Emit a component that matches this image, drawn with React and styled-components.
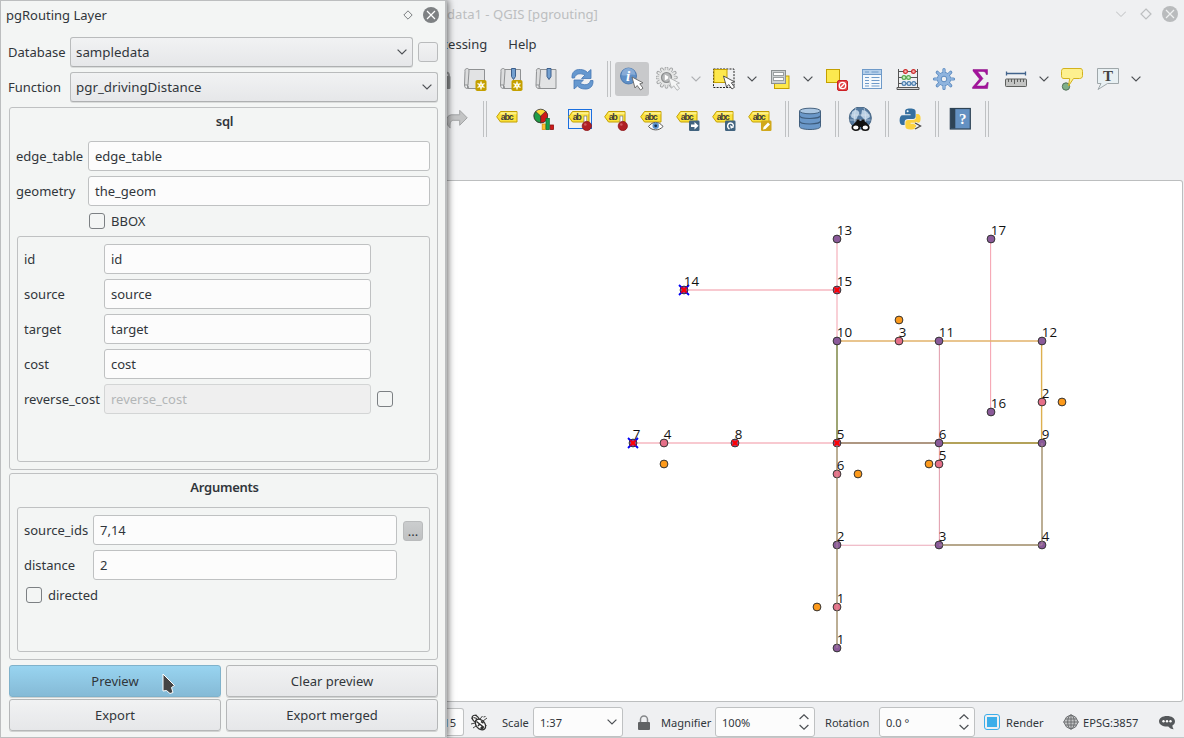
import React from "react";
import styled, { createGlobalStyle } from "styled-components";

const Global = createGlobalStyle`
  * { box-sizing: border-box; }
  body { margin: 0; background: #eff0f1; font-family: "Noto Sans", "Open Sans", sans-serif; color: #31363b; overflow: hidden; }
`;

const Screen = styled.div`
  display: flex;
  width: 1184px;
  height: 738px;
  overflow: hidden;
`;

/* ---------- dialog ---------- */
const Dialog = styled.section`
  width: 447px;
  flex: none;
  height: 738px;
  position: relative;
  z-index: 1;
  background: #f3f5f4;
  border: 1px solid #bcbebf;
  border-right: 2px solid #bcbebf;
  box-shadow: 1px 0 7px rgba(0, 0, 0, 0.6);
  font-size: 13px;
  line-height: 18px;
  padding: 0 7px 0 8px;
  display: flex;
  flex-direction: column;
`;
const DialogTitle = styled.header`
  display: flex;
  align-items: center;
  height: 26px;
  margin: 0 -1px 10px -3px;
  padding-top: 1px;
  flex: none;
  svg { flex: none; }
`;
const TitleText = styled.span`flex: 1;`;
const TitleGap = styled.span`
  width: ${(p) => p.$w}px;
  flex: none;
`;
const FormRow = styled.div`
  display: flex;
  align-items: center;
  height: 30px;
  flex: none;
  margin-bottom: 5px;
  margin-left: ${(p) => p.$ml || 0}px;
`;
const Label = styled.label`
  width: ${(p) => p.$w}px;
  flex: none;
  white-space: nowrap;
`;
const Field = styled.div`
  height: 30px;
  width: ${(p) => p.$w}px;
  flex: none;
  border: 1px solid ${(p) => (p.$off ? "#d3d5d5" : "#bfc1c2")};
  border-radius: 3px;
  background: ${(p) => (p.$off ? "#efefef" : "#fcfcfc")};
  color: ${(p) => (p.$off ? "#b3b6b7" : "#31363b")};
  padding: 0 6px;
  display: flex;
  align-items: center;
`;
const Combo = styled.div`
  height: 30px;
  width: ${(p) => p.$w}px;
  flex: none;
  border: 1px solid #b9bbbc;
  border-bottom-color: #aeb0b1;
  border-radius: 3px;
  background: linear-gradient(#f1f2f3, #e6e7e9);
  box-shadow: 0 1px 0 rgba(0, 0, 0, 0.1);
  padding: 0 5px;
  font-size: 13.33px;
  display: flex;
  align-items: center;
  justify-content: space-between;
`;
const ToolButton = styled.div`
  width: 20px;
  height: 20px;
  flex: none;
  margin: ${(p) => p.$mt || 0}px 0 0 ${(p) => p.$ml}px;
  border: 1px solid #b9bbbc;
  border-radius: 3px;
  background: ${(p) => (p.$dark ? "linear-gradient(#cbcdce,#bfc1c2)" : "linear-gradient(#f1f2f3, #e8e9eb)")};
  display: flex;
  align-items: center;
  justify-content: center;
  line-height: 14px;
`;
const Group = styled.fieldset`
  margin: 0 0 ${(p) => p.$mb}px;
  padding: 0 7px;
  width: 429px;
  height: ${(p) => p.$h}px;
  flex: none;
  border: 1px solid #bfc1c2;
  border-radius: 3px;
  min-width: 0;
`;
const GroupTitle = styled.h3`
  margin: 0;
  padding: 4px 0 0 2px;
  height: ${(p) => p.$h}px;
  font-size: 13px;
  font-weight: 600;
  letter-spacing: -0.25px;
  line-height: 18px;
  text-align: center;
`;
const Frame = styled.div`
  height: ${(p) => p.$h}px;
  border: 1px solid #bfc1c2;
  border-radius: 3px;
  padding: 7px 6px 0;
`;
const CheckRow = styled.div`
  display: flex;
  align-items: center;
  height: 20px;
  gap: 6px;
  margin: 0 0 5px ${(p) => p.$ml}px;
`;
const Check = styled.span`
  width: 16px;
  height: 16px;
  flex: none;
  margin-left: ${(p) => p.$ml || 0}px;
  border: 1px solid ${(p) => (p.$on ? "#3daee9" : "#7c8083")};
  border-radius: 3px;
  padding: 2px;
  background: ${(p) => (p.$on ? "#3daee9" : "none")} content-box;
`;
const Buttons = styled.div`
  display: grid;
  grid-template-columns: 212px 212px;
  gap: 2px 5px;
`;
const PushButton = styled.div`
  position: relative;
  height: 32px;
  border: 1px solid ${(p) => (p.$hot ? "#7fb2cb" : "#b5b7b8")};
  border-radius: 3px;
  background: ${(p) => (p.$hot ? "linear-gradient(#98d4f0,#85bad6)" : "linear-gradient(#f1f2f3, #e6e7e9)")};
  box-shadow: 0 1px 0 rgba(0, 0, 0, 0.14);
  display: flex;
  align-items: center;
  justify-content: center;
`;
const Pointer = styled.svg`
  position: absolute;
  left: 152px;
  top: 7px;
`;

/* ---------- main window ---------- */
const Main = styled.main`
  flex: 1;
  min-width: 0;
  display: flex;
  flex-direction: column;
  background: #eff0f2;
  overflow: hidden;
`;
const WindowTitle = styled.header`
  height: 28px;
  flex: none;
  display: flex;
  align-items: center;
  font-size: 13.1px;
  color: #bcbec0;
  padding-right: 6px;
  svg { flex: none; }
`;
const Menu = styled.nav`
  height: 32px;
  flex: none;
  display: flex;
  align-items: center;
  gap: 21px;
  font-size: 13px;
  margin-bottom: -1px;
`;
const MenuItem = styled.span`
  margin-left: ${(p) => p.$ml || 0}px;
`;
const ToolRow = styled.div`
  height: 40px;
  flex: none;
  display: flex;
  align-items: center;
`;
const Tool = styled.span`
  width: 36px;
  height: 36px;
  flex: none;
  margin-left: ${(p) => p.$ml || 0}px;
  display: flex;
  align-items: center;
  justify-content: center;
`;
const ActiveTool = styled.span`
  width: 34px;
  height: 34px;
  margin: 0 1px;
  flex: none;
  border-radius: 3px;
  background: #c8c9cb;
  display: flex;
  align-items: center;
  justify-content: center;
`;
const Drop = styled.span`
  width: 20px;
  flex: none;
  display: flex;
  justify-content: center;
  opacity: ${(p) => (p.$off ? 0.4 : 1)};
`;
const Sep = styled.span`
  width: 4px;
  height: 36px;
  margin: 0 ${(p) => p.$mr ?? 3}px 0 ${(p) => p.$ml ?? 7}px;
  flex: none;
  border: solid #bfc1c3;
  border-width: 0 1px;
`;
const Canvas = styled.div`
  margin-top: 41px;
  height: 522px;
  flex: none;
  width: 736px;
  background: #fff;
  border: 1px solid #bcbebf;
  border-left: 0;
  border-radius: 0 3px 3px 0;
  svg { display: block; }
`;
const Status = styled.footer`
  flex: 1;
  display: flex;
  align-items: center;
  font-size: 11.1px;
  padding-top: 5px;
  border-bottom: 1px solid #c5c7c8;
`;
const StatusText = styled.span`
  margin-left: ${(p) => p.$ml}px;
  width: ${(p) => p.$w}px;
  flex: none;
  white-space: nowrap;
`;
const StatusBox = styled.div`
  height: 30px;
  width: ${(p) => p.$w}px;
  flex: none;
  border: 1px solid #bfc1c2;
  border-radius: 3px;
  background: #fcfcfc;
  padding: 0 ${(p) => p.$pr ?? 4}px 0 6px;
  display: flex;
  align-items: center;
  justify-content: space-between;
`;
const CoordBox = styled(StatusBox)`
  height: 28px;
  border-left: 0;
  border-radius: 0 3px 3px 0;
  padding: 0 7px 0 0;
  justify-content: flex-end;
`;
const StatusIcon = styled.span`
  margin-left: ${(p) => p.$ml}px;
  width: ${(p) => p.$w}px;
  flex: none;
  display: flex;
`;

/* ---------- icons ---------- */
const Chevron = () => (
  <svg width="10" height="6" viewBox="0 0 10 6" fill="none" stroke="#4d5054" strokeWidth="1.2"><path d="M.6.6 5 5 9.4.6" /></svg>
);
const Spin = () => (
  <svg width="10" height="16" viewBox="0 0 10 16" fill="none" stroke="#4d5054" strokeWidth="1.2"><path d="M.6 5 5 .8 9.4 5M.6 11 5 15.2 9.4 11" /></svg>
);
const Icon = ({ children, ...rest }) => (
  <svg width="24" height="24" viewBox="0 0 24 24" fill="none" {...rest}>{children}</svg>
);
const CloseIcon = ({ color, cross }) => (
  <svg width="16" height="16" viewBox="0 0 16 16"><circle cx="8" cy="8" r="8" fill={color} /><path d="m4 4 8 8M12 4l-8 8" stroke={cross} strokeWidth="1.2" /></svg>
);
const Diamond = ({ s, color }) => (
  <svg width={s} height={s} viewBox="0 0 12 12" fill="none" stroke={color} strokeWidth="1.2"><path d="M6 1 11 6 6 11 1 6Z" /></svg>
);
const Scroll = () => (
  <g stroke="#8f9193" fill="#dcddde">
    <path d="M4.500 2.500h17v19h-17z" fill="#e2e3e4" />
    <path d="M4.500 1.500c-2 0-3 1-2.500 3L1.500 18h3.500L6 4c0-1.500-.5-2.500-1.500-2.500ZM1.500 18c0 2.500 1 3.500 3 3.500" />
    <path d="M5 18.500 5.500 21" />
  </g>
);
const Burst = () => (
  <g><rect x="12.500" y="13" width="11" height="11" rx="1.800" fill="#c4a000" /><path d="M18 14.500v8M14.500 16.500l7 4M21.500 16.500l-7 4" stroke="#fff" strokeWidth="1.300" /><circle cx="18" cy="18.500" r="2.300" fill="#fff" /><circle cx="18" cy="18.500" r="1" fill="#fce94f" /></g>
);
const Bookmark = () => <path d="M12.500 1.500h4v8l-2 3-2-3z" fill="#729fcf" stroke="#3c5f8c" />;
const Arrow = ({ x = 12, y = 10, fill = "#fff", stroke = "#555" }) => (
  <path transform={`translate(${x} ${y})`} d="M.5.5 3.500 11.500 5.700 9 9 13.500 11.500 11.700 8.300 7.300 11.500 6.300Z" fill={fill} stroke={stroke} strokeWidth=".9" />
);
const Refresh = () => (
  <g transform="translate(-.5 0)" fill="#6698cf" stroke="#4577b5" strokeWidth=".8"><path d="M1.500 11C1 5 5 2 10 2.500c3 .2 5 1 7 3l3.500-3v9h-9.500l3.300-3.300C11 6 5 6 4 11Z" /><path d="M22.500 13.500c.5 6-3.500 9-8.500 8.500-3-.2-5-1-7-3l-3.500 3v-9H13l-3.300 3.300C13 18.500 19 18.500 20 13.500Z" /></g>
);
const Tag = ({ text = "abc" }) => (
  <g><path d="M4.500 4.500h16.500v10.500H4.500L.7 9.800Z" fill="#fbe23c" stroke="#c4a000" /><path d="M5 5.200h15.500v2H4z" fill="#fdf08a" /><text x="4.800" y="12.600" fontFamily="Liberation Sans, sans-serif" fontSize="9" fontWeight="700" fill="#3a3a3a" textLength={text === "ab" ? 9 : 13}>{text}</text></g>
);
const Pin = () => (
  <g><rect x="16" y="9" width="2.800" height="8" fill="#fff" stroke="#777" strokeWidth=".7" /><circle cx="18.800" cy="19" r="4.600" fill="#b02025" stroke="#8e1418" strokeWidth=".8" /><circle cx="17.300" cy="17.500" r="1.300" fill="#cf5a5e" /></g>
);
const Badge = ({ color = "#41637f", children }) => (
  <g><rect x="13" y="13.500" width="10.500" height="10.500" rx="1.200" fill={color} />{children}</g>
);
const NewView = () => <Icon><Scroll /><Burst /></Icon>;
const NewMark = () => <Icon><Scroll /><Bookmark /><Burst /></Icon>;
const ShowMark = () => <Icon><g transform="translate(-.5 0)"><Scroll /><Bookmark /></g></Icon>;
const gearTeeth = (n, r1, r2, c) =>
  Array.from({ length: n }, (_, i) => {
    const a = (i * 2 * Math.PI) / n;
    return `M${c + r1 * Math.cos(a)} ${c + r1 * Math.sin(a)}L${c + r2 * Math.cos(a)} ${c + r2 * Math.sin(a)}`;
  }).join("");
const Identify = () => (
  <Icon><circle cx="8.500" cy="9" r="8" fill="#5f8fc6" stroke="#3f6fa8" strokeWidth=".8" /><path d="M1.500 8a7 7 0 0 1 14 0c-5-2-9 2-14 0Z" fill="#87abd6" /><text x="6" y="14.200" fontFamily="Liberation Serif, serif" fontStyle="italic" fontWeight="700" fontSize="15" fill="#fff">i</text><Arrow x={11.500} y={9.500} stroke="#666" /></Icon>
);
const ActionGear = () => (
  <Icon><path d={gearTeeth(12, 7, 9.500, 10.500)} stroke="#a2a4a5" strokeWidth="3.600" strokeLinecap="round" /><path d={gearTeeth(12, 6, 9.300, 10.500)} stroke="#e6e7e7" strokeWidth="2" strokeLinecap="round" /><circle cx="10.500" cy="10.500" r="7.600" fill="#e6e7e7" /><circle cx="10.500" cy="10.500" r="5" fill="#b5b7b8" stroke="#8c8e8f" strokeWidth="1.200" /><path d="M8.800 7.500v6l5-3z" fill="#fff" /><Arrow x={12} y={9.800} stroke="#b0b2b3" fill="#f4f5f5" /></Icon>
);
const SelectArea = () => (
  <Icon><rect x="1.500" y="2" width="20.500" height="18.500" stroke="#222" strokeDasharray="2 1.200" /><rect x="2" y="2.500" width="13" height="13" fill="#fde84d" stroke="#c4a000" /><Arrow x={11} y={8.500} stroke="#444" /></Icon>
);
const SelectForm = () => (
  <Icon><rect x="6.500" y="9" width="14.500" height="12.500" fill="#fde84d" stroke="#c4a000" /><rect x="3.500" y="3.500" width="14" height="13" fill="#ccd0d1" stroke="#8b9091" /><rect x="5.500" y="5.500" width="10" height="3" fill="#fff" stroke="#9a9fa0" /><rect x="5.500" y="10.500" width="10" height="3" fill="#fff" stroke="#9a9fa0" /></Icon>
);
const Deselect = () => (
  <Icon><rect x="2.500" y="2.500" width="13" height="13" fill="#fce94f" stroke="#c4a000" /><rect x="13.500" y="13.500" width="10" height="10" rx="1.500" fill="#e2474b" stroke="#cc1f25" /><circle cx="18.500" cy="18.500" r="3.200" stroke="#fff" strokeWidth="1.300" /><path d="m16.300 20.800 4.500-4.500" stroke="#fff" strokeWidth="1.300" /></Icon>
);
const Table = () => (
  <Icon><rect x="2.500" y="2.500" width="19" height="19" fill="#f4f8fc" stroke="#6e9ac9" /><path d="M3 3h18v4.500H3z" fill="#b5cfea" /><path d="M2.500 7.500h19M5 5h4M11.500 5h7" stroke="#6e9ac9" /><path d="M5 10.500h4M11.500 10.500h8M5 13.500h4M11.500 13.500h8M5 16.500h4M11.500 16.500h8M5 19h4M11.500 19h8" stroke="#6e9ac9" strokeWidth="1" /></Icon>
);
const Abacus = () => (
  <Icon><path d="M2.500 2v18M21.500 2v18M2.500 4.500h19M2.500 10.500h19M2.500 16.500h19" stroke="#555" /><path d="M1 20.500h22v2H1z" fill="#d8d8d8" stroke="#555" /><g strokeWidth="1.200"><g fill="#f7b5b5" stroke="#cc2a2a"><circle cx="9.500" cy="4.500" r="1.900" /><circle cx="17.500" cy="4.500" r="1.900" /></g><g fill="#c9efc4" stroke="#58a94c"><circle cx="8" cy="10.500" r="1.900" /><circle cx="12.500" cy="10.500" r="1.900" /></g><g fill="#cfe0f0" stroke="#4c7fb0"><circle cx="8" cy="16.500" r="1.900" /><circle cx="13" cy="16.500" r="1.900" /><circle cx="17.800" cy="16.500" r="1.900" /></g></g></Icon>
);
const Gear = () => (
  <Icon><path d={gearTeeth(8, 6, 9.500, 12)} stroke="#5b8ac0" strokeWidth="3.200" strokeLinecap="round" /><path d={gearTeeth(8, 5, 9.300, 12)} stroke="#8fb4de" strokeWidth="1.700" strokeLinecap="round" /><circle cx="12" cy="12" r="6.700" fill="#8fb4de" stroke="#5b8ac0" strokeWidth=".8" /><path d={gearTeeth(8, 5, 8.500, 12)} stroke="#8fb4de" strokeWidth="1.700" /><circle cx="12" cy="12" r="2.800" fill="#eff0f2" stroke="#5b8ac0" /></Icon>
);
const Sigma = () => (
  <Icon><path d="M5 2.500h14.500v5h-1.300c-.4-2-1.200-3-3.200-3H9.500l5.500 7-6.500 7.500h7c2 0 3-1.200 3.500-3.500h1.300l-.8 6H4.500v-1.200L11.500 12 5 4Z" fill="#a3129c" stroke="#8a0d84" strokeWidth=".5" /></Icon>
);
const Ruler = () => (
  <Icon><path d="M2.500 6.500h19M2.500 4.500v4M21.500 4.500v4" stroke="#41638c" strokeWidth="1.300" /><rect x="1.500" y="12" width="21" height="7.500" rx=".8" fill="#c3c4c3" stroke="#5d5f5d" /><path d="M4.500 12v3M7.500 12v3M10.500 12v5M13.500 12v3M16.500 12v3M19.500 12v3" stroke="#5d5f5d" /></Icon>
);
const Tip = () => (
  <Icon><circle cx="6" cy="19.500" r="3.700" fill="#7fb088" stroke="#55705a" /><path d="M4 1.500h16c2 0 2.500 1 2.500 3v4c0 2-1 3-3 3h-6L8.500 19l1.200-7.500H4c-2 0-2.500-1-2.500-3v-4c0-2 .8-3 2.500-3Z" fill="#fdf08f" stroke="#d3b21c" /></Icon>
);
const TextBox = () => (
  <Icon><path d="M1.500 1.500h21v15H11.500L2 22.500l3-6H1.500Z" fill="#e8f0f3" stroke="#9fa7aa" /><text x="7" y="14" fontFamily="Liberation Serif, serif" fontWeight="700" fontSize="15" fill="#444">T</text></Icon>
);
const Redo = () => (
  <Icon><path d="M5.500 20C1 17 0 8 6.500 7H15V2.500L22.500 10 15 17.500V12.500H8.500c-3 0-3.500 4-3 7.500Z" transform="translate(-1.300 .8)" fill="#c3c4c5" stroke="#a2a4a5" /></Icon>
);
const Diagram = () => (
  <Icon><g transform="translate(.7 0)"><circle cx="8" cy="9" r="6.800" fill="#fdd835" stroke="#333" strokeWidth=".8" /><path d="M8 9V15.800A6.800 6.800 0 0 1 3 4.500Z" fill="#1f9d47" stroke="#333" strokeWidth=".7" /><path d="M8 9 13 4.200A6.800 6.800 0 0 1 8 15.800Z" fill="#d01818" stroke="#333" strokeWidth=".7" /><rect x="9.500" y="17" width="3.300" height="5.500" fill="#fbc02d" stroke="#e09010" strokeWidth=".8" /><rect x="13.300" y="11.500" width="3.300" height="11" fill="#18a050" stroke="#0b7233" strokeWidth=".8" /><rect x="17.500" y="18" width="3.300" height="4.500" fill="#d01818" stroke="#8c1010" strokeWidth=".8" /></g></Icon>
);
const Database = () => (
  <Icon><path d="M1.500 4v15.500c0 1.800 4.500 3 10.500 3s10.500-1.200 10.500-3V4" fill="#6a97c8" stroke="#44617f" /><path d="M1.500 8.500c0 1.800 4.500 3 10.500 3s10.500-1.200 10.500-3M1.500 14c0 1.800 4.500 3 10.500 3s10.500-1.200 10.500-3" stroke="#3d5b7b" strokeWidth="1.200" /><ellipse cx="12" cy="4" rx="10.500" ry="2.800" fill="#aac6e2" stroke="#44617f" /></Icon>
);
const Search = () => (
  <Icon><circle cx="12.300" cy="11" r="11" fill="#54799f" stroke="#4a6886" /><path d="M4 5c3-3 6-2 7 0s-1 3-2 6-4 0-6-1ZM14 3c4 0 7 3 8 7l-5 3-4-4ZM8 13l4 1-1 5Z" fill="#b9cfe3" /><path d="M2 8h20M1.500 13h21M8 1c-2 6-2 12 0 19M16 1c2 6 2 12 0 19" stroke="#dbe6f0" strokeWidth=".6" /><path d="M9 14h7l3 2 2 4H4.500l2-4Z" fill="#111" /><path d="M8.500 12.500h3v3h-3zM13.500 12.500h3v3h-3z" fill="#111" /><g fill="#fff" stroke="#111" strokeWidth="1.600"><ellipse cx="7.800" cy="20.500" rx="3.500" ry="2.700" /><ellipse cx="17.300" cy="20.500" rx="3.500" ry="2.700" /></g></Icon>
);
const Python = () => (
  <Icon><g transform="translate(.6 0)"><path d="M11.500 1.500c-4 0-5 1-5 3v2.700h5.500v1H4c-2 0-3 2-3 5s1 4.800 3 4.800h2v-3c0-2 1.500-3 3.500-3h5c1.500 0 2.500-1 2.500-2.500v-5c0-2-1.500-3-5.500-3Z" fill="#356f9f" /><path d="M12 22.500c4 0 5.500-1 5.500-3v-2.700H12v-1h7.500c2 0 2.500-2 2.500-4.500s-1-4.300-3-4.300h-1.500v3c0 2-1.500 3-3.500 3H9.300c-1.500 0-2.500 1-2.500 2.500v4c0 2 1.500 3 5.200 3Z" fill="#fbd23f" /><circle cx="9" cy="4.300" r="1" fill="#fff" /><path d="m16.500 16 5.500 3-5.500 3" stroke="#eff0f2" strokeWidth="3" /><path d="m16.500 16 5.500 3-5.500 3" stroke="#444" strokeWidth="1.200" /></g></Icon>
);
const Help = () => (
  <Icon><rect x="2.300" y="1.500" width="20" height="20.500" fill="#6491c2" stroke="#2e4355" strokeWidth="1.200" /><path d="M2.800 2h4.500v19.500H2.800z" fill="#2e4355" /><text x="11" y="17" fontFamily="Liberation Serif, serif" fontSize="15" fill="#fff" fontWeight="700">?</text></Icon>
);
const EyeMark = () => <g><path d="M8.500 19.500c4-5.500 10.500-5.500 14.500 0-4 4.500-10.500 4.500-14.500 0Z" fill="#fff" stroke="#555" /><circle cx="15.700" cy="18.800" r="3.200" fill="#5a93cf" /><circle cx="15.700" cy="18.800" r="1.400" fill="#16324f" /></g>;
const Unlocked = () => (
  <svg width="6" height="24" viewBox="18 0 6 24"><rect x="15" y="9" width="6.500" height="13" rx="1" fill="#8d8f90" /><path d="M17 9V6q3-1 3 3" fill="none" stroke="#9a9c9d" strokeWidth="2" /></svg>
);
const Beetle = () => (
  <svg width="18" height="18" viewBox="0 0 18 18" fill="none" stroke="#2f2f2f">
    <path d="M6 1.500 7.500 5M1.500 5.500 5 6M12.500 3 10 6M17 5l-4 3M1 11l4-1M3 15l3-2M16.500 12.500 13 11M15.500 3.500l-2 .5" strokeWidth=".9" />
    <ellipse cx="5.800" cy="6" rx="4.200" ry="2.900" transform="rotate(48 5.800 6)" fill="#fff" strokeWidth="1.200" />
    <path d="m3.500 4.500 3.500 1M5 7.500l4-1.500" strokeWidth="1.300" />
    <ellipse cx="10.500" cy="11.500" rx="6" ry="4.300" transform="rotate(48 10.500 11.500)" fill="#fff" strokeWidth="1.300" />
    <path d="M6.500 8.500 14 14.500M8 13l2-2.500M11 8.500l2.500 1.500" strokeWidth="1.500" />
    <circle cx="12" cy="15" r="1.200" fill="#2f2f2f" />
  </svg>
);
const Lock = () => (
  <svg width="12" height="15" viewBox="0 0 12 15"><path d="M2.500 7V4.500a3.500 3.500 0 0 1 7 0V7" fill="none" stroke="#85878a" strokeWidth="1.500" /><rect y="7" width="12" height="8" rx="1" fill="#606264" /></svg>
);
const Globe = () => (
  <svg width="16" height="16" viewBox="0 0 16 16" fill="none" stroke="#66696b" strokeWidth=".9"><path d="M8 .8 12.500 3 15.300 8 12.500 13 8 15.200 3.500 13 .7 8 3.500 3Z" fill="#c5c6c7" /><ellipse cx="8" cy="8" rx="3.300" ry="7" /><path d="M.5 8h15M8 1v14M2.300 5h11.400M2.300 11h11.400" /></svg>
);
const Bubble = () => (
  <svg width="16" height="15" viewBox="0 0 16 15"><path d="M8 1c4.600 0 8 2.200 8 5.300 0 2.200-1.200 3.500-2.600 4.200.1 1.700.5 2.700 1.400 3.700-2.500-.1-4.300-1-5.500-2.700L8 11.600C3.400 11.600 0 9.400 0 6.300S3.400 1 8 1Z" fill="#55585b" /><g fill="#fff"><circle cx="4.500" cy="6.300" r="1.200" /><circle cx="8" cy="6.300" r="1.200" /><circle cx="11.500" cy="6.300" r="1.200" /></g></svg>
);

/* ---------- graph ---------- */
const PINK = "#f6b7c1";
const TAN = "#b0a285";
const EDGES = [
  [837, 239, 837, 341, PINK, 1.3],
  [684, 290, 837, 290, PINK, 1.3],
  [633, 443, 837, 443, PINK, 1.3],
  [990.6, 239, 990.6, 412, "#f6a6b4", 1.1],
  [939.4, 341, 939.4, 545, "#e3a2b0", 1.1],
  [837, 545.3, 939, 545.3, "#eba9b8", 1.1],
  [837, 341, 1042, 341, "#e2b26a", 1.7],
  [1041.6, 341, 1041.6, 443, "#ddb04f", 1.4],
  [837, 341, 837, 443, "#8d965c", 1.7],
  [837, 443, 939, 443, "#ae9782", 1.8],
  [939, 443, 1042, 443, "#b3a25a", 1.8],
];
const TOP_EDGES = [
  [837, 443, 837, 648],
  [939, 545, 1042, 545],
  [1042, 443, 1042, 545],
];
const VERTICES = [
  [837, 239, 13], [991, 239, 17], [684, 290, 14], [837, 290, 15], [837, 341, 10], [939, 341, 11], [1042, 341, 12],
  [991, 412, 16], [633, 443, 7], [735, 443, 8], [837, 443, 5], [939, 443, 6], [1042, 443, 9],
  [837, 545, 2], [939, 545, 3], [1042, 545, 4], [837, 648, 1],
];
const POINTS = [[899, 341, 3], [1042, 402, 2], [664, 443, 4], [939, 464, 5], [837, 474, 6], [837, 607, 1]];
const ORIGINS = [[899, 320], [1062, 402], [664, 464], [929, 464], [858, 474], [817, 607]];
const REACHED = [[684, 290], [837, 290], [633, 443], [735, 443], [837, 443]];
const STARTS = [[684, 290], [633, 443]];

const Graph = () => (
  <svg width="735" height="520" viewBox="447 181 735 520">
    {EDGES.map(([a, b, c, d, s, w], i) => <line key={i} x1={a} y1={b} x2={c} y2={d} stroke={s} strokeWidth={w} />)}
    {TOP_EDGES.map(([a, b, c, d], i) => <line key={i} x1={a} y1={b} x2={c} y2={d} stroke={TAN} strokeWidth="1.8" />)}
    <g stroke="#333" strokeWidth="1">
      {VERTICES.map(([x, y, n]) => <circle key={n} cx={x} cy={y} r="3.9" fill="#8a5a99" />)}
      {POINTS.map(([x, y, n]) => <circle key={n} cx={x} cy={y} r="3.9" fill="#e56f88" />)}
      {ORIGINS.map(([x, y], i) => <circle key={i} cx={x} cy={y} r="3.9" fill="#fd9a1b" />)}
    </g>
    {TOP_EDGES.map(([a, b, c, d], i) => <line key={i} x1={a} y1={b} x2={c} y2={d} stroke="#c8b8a0" strokeWidth="1" opacity=".5" />)}
    {STARTS.map(([x, y], i) => <path key={i} d={`M${x - 5} ${y - 5}l10 10m0-10l-10 10`} stroke="#0000f5" strokeWidth="1.8" />)}
    {REACHED.map(([x, y], i) => (
      <g key={i}><circle cx={x} cy={y} r="2.4" fill="#f01020" /><path d={`M${x - 2.800} ${y - 2.800}l5.600 5.600m0-5.600l-5.600 5.600`} stroke="#ff0000" strokeWidth="1.6" /></g>
    ))}
    <g fontFamily="Open Sans, Noto Sans, sans-serif" fontSize="13.33" fill="#111">
      {[...VERTICES, ...POINTS].map(([x, y, n], i) => <text key={i} x={x - 0.2} y={y - 3.7}>{n}</text>)}
    </g>
  </svg>
);

const COLUMNS = ["id", "source", "target", "cost"];

export default function App() {
  return (
    <Screen>
      <Global />
      <Dialog>
        <DialogTitle>
          <TitleText>pgRouting Layer</TitleText>
          <Diamond s={10} color="#7b7e80" />
          <TitleGap $w={10} />
          <CloseIcon color="#7e8183" cross="#fff" />
        </DialogTitle>
        <FormRow $ml={-1}>
          <Label $w={62}>Database</Label>
          <Combo $w={343}>sampledata<Chevron /></Combo>
          <ToolButton $ml={5} />
        </FormRow>
        <FormRow $ml={-1}>
          <Label $w={62}>Function</Label>
          <Combo $w={368}>pgr_drivingDistance<Chevron /></Combo>
        </FormRow>
        <Group $h={363} $mb={3}>
          <GroupTitle $h={33}>sql</GroupTitle>
          <FormRow $ml={-1}><Label $w={72}>edge_table</Label><Field $w={342}>edge_table</Field></FormRow>
          <FormRow $ml={-1}><Label $w={72}>geometry</Label><Field $w={342}>the_geom</Field></FormRow>
          <CheckRow $ml={72}><Check />BBOX</CheckRow>
          <Frame $h={226}>
            {COLUMNS.map((c) => (
              <FormRow key={c}><Label $w={80}>{c}</Label><Field $w={267}>{c}</Field></FormRow>
            ))}
            <FormRow><Label $w={80}>reverse_cost</Label><Field $w={267} $off>reverse_cost</Field><Check $ml={6} /></FormRow>
          </Frame>
        </Group>
        <Group $h={187} $mb={5}>
          <GroupTitle $h={33}>Arguments</GroupTitle>
          <Frame $h={145}>
            <FormRow><Label $w={69}>source_ids</Label><Field $w={304}>7,14</Field><ToolButton $ml={6} $mt={2} $dark>...</ToolButton></FormRow>
            <FormRow><Label $w={69}>distance</Label><Field $w={304}>2</Field></FormRow>
            <CheckRow $ml={2}><Check />directed</CheckRow>
          </Frame>
        </Group>
        <Buttons>
          <PushButton $hot>
            Preview
            <Pointer width="14" height="22" viewBox="0 0 14 22"><path d="M1 1 12.500 12.500 9.500 14.500 11 19.500 8 20.500 4.500 17.500 1 18Z" fill="#444" stroke="#fff" /></Pointer>
          </PushButton>
          <PushButton>Clear preview</PushButton>
          <PushButton>Export</PushButton>
          <PushButton>Export merged</PushButton>
        </Buttons>
      </Dialog>

      <Main>
        <WindowTitle>
          <TitleText>data1 - QGIS [pgrouting]</TitleText>
          <svg width="10" height="6" viewBox="0 0 10 6" fill="none" stroke="#bcbec0"><path d="M0 .5 5 5.500 10 .5" /></svg>
          <TitleGap $w={14} />
          <Diamond s={12} color="#bcbec0" />
          <TitleGap $w={10} />
          <CloseIcon color="#b9bbbd" cross="#eff0f1" />
        </WindowTitle>
        <Menu><MenuItem $ml={-26}>Processing</MenuItem><MenuItem>Help</MenuItem></Menu>
        <ToolRow>
          <Unlocked />
          <Tool $ml={4}><NewView /></Tool>
          <Tool><NewMark /></Tool>
          <Tool><ShowMark /></Tool>
          <Tool><Icon><Refresh /></Icon></Tool>
          <Sep $ml={6} $mr={3} />
          <ActiveTool><Identify /></ActiveTool>
          <Tool><ActionGear /></Tool><Drop $off><Chevron /></Drop>
          <Tool><SelectArea /></Tool><Drop><Chevron /></Drop>
          <Tool><SelectForm /></Tool><Drop><Chevron /></Drop>
          <Tool><Deselect /></Tool>
          <Tool><Table /></Tool>
          <Tool><Abacus /></Tool>
          <Tool><Gear /></Tool>
          <Tool><Sigma /></Tool>
          <Tool><Ruler /></Tool><Drop><Chevron /></Drop>
          <Tool><Tip /></Tool>
          <Tool><TextBox /></Tool><Drop><Chevron /></Drop>
        </ToolRow>
        <ToolRow>
          <Tool $ml={-7}><Redo /></Tool>
          <Sep />
          <Tool><Icon><Tag /></Icon></Tool>
          <Tool><Diagram /></Tool>
          <Tool><Icon><rect x=".5" y="2.500" width="23" height="19" stroke="#1a6fe0" /><Tag text="ab" /><Pin /></Icon></Tool>
          <Tool><Icon><Tag text="ab" /><Pin /></Icon></Tool>
          <Tool><Icon><Tag /><EyeMark /></Icon></Tool>
          <Tool><Icon><Tag /><Badge><path d="M15 17.500h3.500V15l4 3.700-4 3.800v-2.500H15z" fill="#fff" /></Badge></Icon></Tool>
          <Tool><Icon><Tag /><Badge><path d="M17.500 22c-3-1.500-2-6 1-6 2.500 0 3.500 2.500 2.300 4" stroke="#fff" strokeWidth="1.400" /><path d="m18 18 .8 3.700 3.200-1.500z" fill="#fff" /></Badge></Icon></Tool>
          <Tool><Icon><Tag /><Badge color="#d0a81c"><path d="m15 22.500.6-2.500 4.400-4.500 2 2-4.500 4.400z" fill="#fff" /></Badge></Icon></Tool>
          <Sep />
          <Tool><Database /></Tool>
          <Sep />
          <Tool><Search /></Tool>
          <Sep />
          <Tool><Python /></Tool>
          <Sep />
          <Tool><Help /></Tool>
          <Sep />
        </ToolRow>
        <Canvas><Graph /></Canvas>
        <Status>
          <CoordBox $w={17}>15</CoordBox>
          <StatusIcon $ml={6} $w={18}><Beetle /></StatusIcon>
          <StatusText $ml={14} $w={31}>Scale</StatusText>
          <StatusBox $w={90} $pr={5}>1:37<Chevron /></StatusBox>
          <StatusIcon $ml={15} $w={12}><Lock /></StatusIcon>
          <StatusText $ml={11} $w={54}>Magnifier</StatusText>
          <StatusBox $w={100} $pr={5}>100%<Spin /></StatusBox>
          <StatusText $ml={10} $w={54}>Rotation</StatusText>
          <StatusBox $w={96} $pr={5}>0.0 °<Spin /></StatusBox>
          <Check $ml={9} $on />
          <StatusText $ml={6} $w={57}>Render</StatusText>
          <StatusIcon $ml={0} $w={20}><Globe /></StatusIcon>
          <StatusText $ml={0} $w={76}>EPSG:3857</StatusText>
          <Bubble />
        </Status>
      </Main>
    </Screen>
  );
}
